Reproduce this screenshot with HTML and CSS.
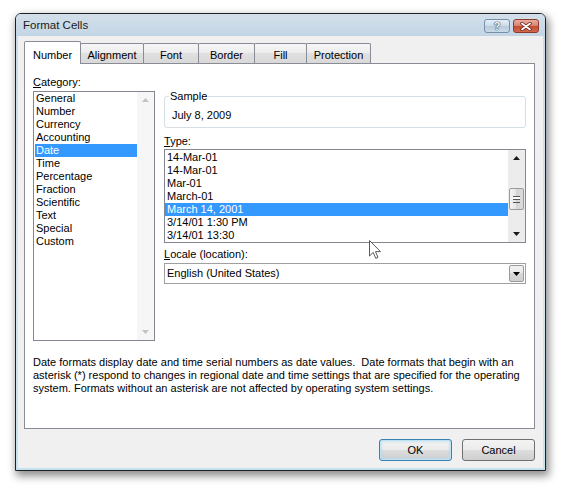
FILE: index.html
```html
<!DOCTYPE html>
<html>
<head>
<meta charset="utf-8">
<title>Format Cells</title>
<link rel="stylesheet" href="styles.css">
</head>
<body>
<div class="window">
  <div class="titlebar">
    <span class="title">Format Cells</span>
    <div class="caption-btns">
      <span class="cap-btn help">?</span>
      <span class="cap-btn close">
        <svg width="12" height="9" viewBox="0 0 12 9">
          <path d="M2 1.5 L10 7.5 M10 1.5 L2 7.5" stroke="#6b1d10" stroke-width="3.4" stroke-linecap="round"/>
          <path d="M2 1.5 L10 7.5 M10 1.5 L2 7.5" stroke="#ffffff" stroke-width="1.8" stroke-linecap="round"/>
        </svg>
      </span>
    </div>
  </div>
  <div class="client">
    <div class="tabs">
      <div class="tab active t-number">Number</div>
      <div class="tab t-align">Alignment</div>
      <div class="tab t-font">Font</div>
      <div class="tab t-border">Border</div>
      <div class="tab t-fill">Fill</div>
      <div class="tab t-prot">Protection</div>
    </div>
    <div class="panel">
      <div class="columns">
        <div class="left">
          <div class="label"><u>C</u>ategory:</div>
          <div class="listbox cat">
            <ul class="items">
              <li>General</li>
              <li>Number</li>
              <li>Currency</li>
              <li>Accounting</li>
              <li class="sel">Date</li>
              <li>Time</li>
              <li>Percentage</li>
              <li>Fraction</li>
              <li>Scientific</li>
              <li>Text</li>
              <li>Special</li>
              <li>Custom</li>
            </ul>
            <div class="vscroll disabled">
              <div class="arrow"><svg width="7" height="4" viewBox="0 0 7 4"><path d="M0 4 L3.5 0 L7 4 Z" fill="#c2c2c2"/></svg></div>
              <div class="track"></div>
              <div class="arrow"><svg width="7" height="4" viewBox="0 0 7 4"><path d="M0 0 L3.5 4 L7 0 Z" fill="#c2c2c2"/></svg></div>
            </div>
          </div>
        </div>
        <div class="right">
          <fieldset class="sample">
            <legend>Sample</legend>
            <div class="sample-value">July 8, 2009</div>
          </fieldset>
          <div class="label type-label"><u>T</u>ype:</div>
          <div class="listbox type">
            <ul class="items">
              <li>14-Mar-01</li>
              <li>14-Mar-01</li>
              <li>Mar-01</li>
              <li>March-01</li>
              <li class="sel">March 14, 2001</li>
              <li>3/14/01 1:30 PM</li>
              <li>3/14/01 13:30</li>
            </ul>
            <div class="vscroll">
              <div class="arrow"><svg width="7" height="4" viewBox="0 0 7 4"><path d="M0 4 L3.5 0 L7 4 Z" fill="#1a1a1a"/></svg></div>
              <div class="track">
                <div class="thumb"><span class="grip"></span></div>
              </div>
              <div class="arrow"><svg width="7" height="4" viewBox="0 0 7 4"><path d="M0 0 L3.5 4 L7 0 Z" fill="#1a1a1a"/></svg></div>
            </div>
          </div>
          <div class="label locale-label"><u>L</u>ocale (location):</div>
          <div class="combo">
            <span class="combo-text">English (United States)</span>
            <span class="drop"><svg width="7" height="4" viewBox="0 0 7 4"><path d="M0 0 L3.5 4 L7 0 Z" fill="#000"/></svg></span>
          </div>
        </div>
      </div>
      <p class="desc">Date formats display date and time serial numbers as date values.&nbsp; Date formats that begin with an<br>asterisk (*) respond to changes in regional date and time settings that are specified for the operating<br>system. Formats without an asterisk are not affected by operating system settings.</p>
    </div>
    <div class="buttons">
      <button class="btn default">OK</button>
      <button class="btn">Cancel</button>
    </div>
  </div>
</div>
<svg class="cursor" width="13" height="20" viewBox="0 0 13 20">
  <path d="M0.5 0.5 L0.5 16 L4.2 12.4 L6.8 18.4 L9 17.4 L6.5 11.6 L11.5 11.6 Z" fill="#ffffff" stroke="#5a5a5a" stroke-width="1" stroke-linejoin="round"/>
</svg>
</body>
</html>
```

FILE: styles.css
```css
* {
  box-sizing: border-box;
}

html,
body {
  margin: 0;
  padding: 0;
}

body {
  width: 568px;
  height: 494px;
  overflow: hidden;
  position: relative;
  background: #ffffff;
  font-family: "Liberation Sans", Arial, sans-serif;
  font-size: 11px;
  line-height: 13px;
  color: #000000;
}

.window {
  margin: 13px 0 0 15px;
  width: 531px;
  height: 458px;
  border: 1px solid #1d2125;
  border-radius: 6px 6px 0 0;
  background: linear-gradient(#c9d9e7, #d6e5ef 60%, #c4e3ec);
  box-shadow: 2px 4px 9px 1px rgba(0, 0, 0, 0.45);
  display: flex;
  flex-direction: column;
  padding: 0 2px 2px 2px;
}

.titlebar {
  height: 22px;
  margin: 0 -2px;
  padding: 0 6px 0 7px;
  border-radius: 5px 5px 0 0;
  background: linear-gradient(#d3e0eb, #c3d5e4);
  display: flex;
  align-items: flex-start;
  justify-content: space-between;
}

.title {
  font-size: 11.5px;
  line-height: 13px;
  margin-top: 5px;
  color: #1b1b1b;
}

.caption-btns {
  display: flex;
  margin-top: 5px;
}

.cap-btn {
  width: 26px;
  height: 14px;
  border: 1px solid;
  border-radius: 3px;
  display: flex;
  align-items: center;
  justify-content: center;
}

.help {
  border-color: #7590aa;
  background: linear-gradient(#e6eef6, #ccdbe8 50%, #b7cadb 50%, #c9dae8);
  color: #ffffff;
  font-weight: bold;
  font-size: 11px;
  line-height: 12px;
  text-shadow: 0 0 1px #2c3a48, 0 0 1px #2c3a48, 0 0 1px #2c3a48;
}

.close {
  margin-left: 3px;
  border-color: #8c3a2a;
  background: linear-gradient(#e9aca0, #d6826f 50%, #c4492f 50%, #d36a4e);
}

.client {
  flex: 1;
  background: #f0f0f0;
  padding: 5px 8px 7px 6px;
  display: flex;
  flex-direction: column;
}

.tabs {
  display: flex;
  align-items: flex-end;
}

.tab {
  height: 20px;
  border: 1px solid #898c95;
  border-bottom: none;
  border-radius: 2px 2px 0 0;
  margin-left: -1px;
  padding-top: 5px;
  text-align: center;
  white-space: nowrap;
  background: linear-gradient(#f6f6f6, #ececec 50%, #e0e0e0 50%, #d9d9d9);
}

.tab.active {
  height: 23px;
  margin-bottom: -1px;
  margin-left: 0;
  padding-top: 7px;
  background: #ffffff;
  position: relative;
  z-index: 1;
}

.t-number { width: 57px; }
.t-align { width: 64px; }
.t-font { width: 56px; }
.t-border { width: 57px; }
.t-fill { width: 53px; }
.t-prot { width: 65px; }

.panel {
  flex: 1;
  background: #ffffff;
  border: 1px solid #898c95;
  padding: 12px 7px 0 8px;
}

.columns {
  display: flex;
  gap: 9px;
}

.left {
  width: 122px;
  display: flex;
  flex-direction: column;
}

.right {
  width: 362px;
  padding-top: 14px;
  display: flex;
  flex-direction: column;
}

.label {
  height: 13px;
  margin-bottom: 2px;
  white-space: nowrap;
}

.label u {
  text-decoration: underline;
}

.listbox {
  border: 1px solid #828790;
  background: #ffffff;
  display: flex;
}

.listbox.cat {
  height: 250px;
}

.listbox.type {
  height: 94px;
}

.items {
  list-style: none;
  margin: 0;
  padding: 0 0 0 1px;
  flex: 1;
  min-width: 0;
}

.type .items {
  padding: 1px 0 0 0;
}

.items li {
  height: 13px;
  padding-left: 1px;
  white-space: nowrap;
}

.type .items li {
  padding-left: 2px;
}

.items li.sel {
  background: #3399ff;
  color: #ffffff;
}

.vscroll {
  width: 17px;
  display: flex;
  flex-direction: column;
  background: #ececec;
}

.vscroll.disabled {
  background: #f6f6f6;
}

.vscroll .arrow {
  height: 16px;
  display: flex;
  align-items: center;
  justify-content: center;
}

.vscroll .track {
  flex: 1;
  display: flex;
  flex-direction: column;
}

.type .track {
  padding-top: 22px;
}

.thumb {
  height: 22px;
  margin: 0 1px;
  border: 1px solid #9a9a9a;
  border-radius: 2px;
  background: linear-gradient(90deg, #f4f4f4, #e4e4e4 50%, #d4d4d4 50%, #dcdcdc);
  display: flex;
  align-items: center;
  justify-content: center;
}

.grip {
  width: 7px;
  height: 7px;
  border-top: 1px solid #555;
  border-bottom: 1px solid #555;
  background: linear-gradient(#ffffff 0, #ffffff 2px, #555 2px, #555 3px, transparent 3px);
}

.sample {
  margin: 0;
  padding: 6px 7px 5px 7px;
  border: 1px solid #d5dfe5;
  border-radius: 3px;
  min-width: 0;
}

.sample legend {
  padding: 0 1px;
  margin-left: -3px;
  line-height: 13px;
}

.sample-value {
  height: 13px;
  white-space: nowrap;
}

.type-label {
  margin-top: 7px;
  margin-bottom: 1px;
}

.locale-label {
  margin-top: 5px;
  margin-bottom: 2px;
}

.combo {
  height: 21px;
  border: 1px solid #a0a0a0;
  background: #ffffff;
  display: flex;
  align-items: center;
  justify-content: space-between;
  padding: 0 1px 0 2px;
}

.combo-text {
  white-space: nowrap;
}

.drop {
  width: 15px;
  height: 17px;
  border: 1px solid #9a9a9a;
  border-radius: 2px;
  background: linear-gradient(#f2f2f2, #e8e8e8 50%, #d8d8d8 50%, #cfcfcf);
  display: flex;
  align-items: center;
  justify-content: center;
}

.desc {
  margin: 15px 0 0 0;
  white-space: nowrap;
}

.buttons {
  display: flex;
  justify-content: flex-end;
  gap: 10px;
  margin-top: 10px;
}

.btn {
  width: 73px;
  height: 22px;
  padding: 0;
  border: 1px solid #707070;
  border-radius: 3px;
  background: linear-gradient(#f3f3f3, #ebebeb 50%, #dddddd 50%, #cfcfcf);
  font-family: inherit;
  font-size: 11px;
  line-height: 13px;
  color: #000000;
}

.btn.default {
  border-color: #3c7fb1;
  box-shadow: inset 0 0 0 1px #bfe2f5, inset 0 0 2px 2px rgba(170, 220, 245, 0.5);
}

.cursor {
  position: absolute;
  left: 369px;
  top: 240px;
}
```
